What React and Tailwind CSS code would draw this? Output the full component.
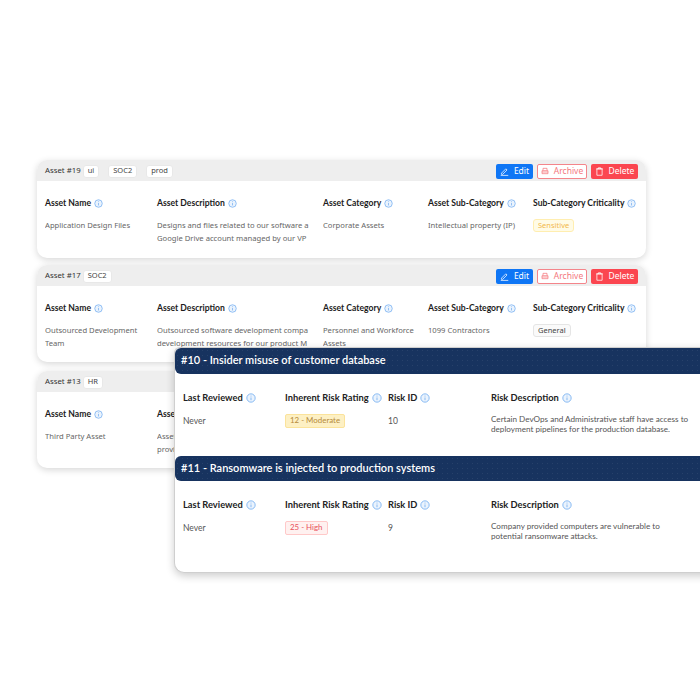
import React from "react";

const sans = "font-['Noto_Sans','Open_Sans',sans-serif]";
const lato = "font-['Lato',sans-serif]";

function Info({ size = "w-[9px] h-[9px]" }) {
  return (
    <svg viewBox="0 0 12 12" className={`${size} shrink-0`} fill="none" stroke="#74aef0" strokeWidth="1">
      <circle cx="6" cy="6" r="5" fill="#eaf3fd" />
      <path d="M6 5.4v3.2" />
      <path d="M6 3.2v1" />
    </svg>
  );
}

function Badge({ children }) {
  return (
    <span className="inline-flex items-center h-[13px] px-[4px] bg-white border border-[#e8e8e8] rounded-[3px] text-[7.5px] text-[#444]">
      {children}
    </span>
  );
}

function Buttons() {
  return (
    <div className="ml-auto flex items-center text-[8.5px]">
      <button className="flex items-center justify-center gap-[5px] w-[37px] h-[15px] rounded-[2px] bg-[#0f76f5] text-white">
        <svg viewBox="0 0 12 12" className="w-[9px] h-[9px]" fill="none" stroke="white" strokeWidth="1">
          <path d="M2 8.2 7.8 2.4l1.6 1.6L3.6 9.8H2z" />
          <path d="M1 11.2h10" />
        </svg>
        Edit
      </button>
      <button className="flex items-center justify-center gap-[5px] w-[50px] h-[15px] ml-[4px] rounded-[2px] bg-white border border-[#f4858b] text-[#f4767d]">
        <svg viewBox="0 0 12 12" className="w-[8px] h-[8px]" fill="none" stroke="#f4767d" strokeWidth="1.1">
          <path d="M3 5V2h6v3" />
          <path d="M1.5 5.5h9V10h-9z" />
          <path d="M1.5 7.5h9" />
        </svg>
        Archive
      </button>
      <button className="flex items-center justify-center gap-[5px] w-[47px] h-[15px] ml-[4px] rounded-[2px] bg-[#fb4650] text-white">
        <svg viewBox="0 0 12 12" className="w-[9px] h-[9px]" fill="none" stroke="white" strokeWidth="1">
          <path d="M1.5 2.5h9" />
          <path d="M4.5 2.5V1h3v1.5" />
          <path d="M2.5 2.5h7V11h-7z" />
        </svg>
        Delete
      </button>
    </div>
  );
}

function AssetHead({ children, w }) {
  return (
    <div className={`flex items-center gap-[3px] text-[8.6px] font-bold text-[#1c1c1c] whitespace-nowrap ${lato} ${w}`}>
      {children}
      <Info />
    </div>
  );
}

function AssetCell({ children, w }) {
  return <div className={`text-[7.65px] leading-[13px] text-[#666] overflow-hidden ${w}`}>{children}</div>;
}

function AssetCard({ id, tags, name, desc, cat, sub, crit, critClass, h }) {
  return (
    <div className={`w-[609px] ${h} bg-white rounded-[10px] overflow-hidden shadow-[0_2px_7px_rgba(0,0,0,0.16)] ${sans}`}>
      <div className="flex items-center h-[21px] pl-[8px] pr-[8px] pt-[1px] bg-[#eeeeee]">
        <span className="text-[7.8px] text-[#333] mr-[2px]">Asset #{id}</span>
        <div className="flex items-center gap-[9px]">
          {tags.map((t) => (
            <Badge key={t}>{t}</Badge>
          ))}
        </div>
        <Buttons />
      </div>
      <div className="flex pl-[8px] pt-[16px]">
        <AssetHead w="w-[112px]">Asset Name</AssetHead>
        <AssetHead w="w-[166px]">Asset Description</AssetHead>
        <AssetHead w="w-[105px]">Asset Category</AssetHead>
        <AssetHead w="w-[105px]">Asset Sub-Category</AssetHead>
        <AssetHead w="w-[113px]">Sub-Category Criticality</AssetHead>
      </div>
      <div className="flex pl-[8px] pt-[9px]">
        <AssetCell w="w-[112px] pr-[8px]">{name}</AssetCell>
        <div className="w-[166px]">
          <AssetCell w="w-[153px] whitespace-nowrap">
            {desc[0]}
            <br />
            {desc[1]}
          </AssetCell>
        </div>
        <AssetCell w="w-[105px] pr-[5px]">{cat}</AssetCell>
        <AssetCell w="w-[105px]">{sub}</AssetCell>
        <div className="w-[113px] flex items-start">
          <span className={`flex items-center h-[13px] px-[4px] rounded-[3px] border text-[7.5px] ${critClass}`}>{crit}</span>
        </div>
      </div>
    </div>
  );
}

function RiskHead({ children, w }) {
  return (
    <div className={`flex items-center gap-[3px] text-[9.3px] font-bold text-[#222] whitespace-nowrap ${w}`}>
      {children}
      <Info size="w-[10px] h-[10px]" />
    </div>
  );
}

function Risk({ title, titleH, rating, ratingClass, id, desc }) {
  return (
    <div>
      <div className={`${titleH} flex items-center pl-[6px] pb-[1px] rounded-l-[6px] bg-[#17335f] bg-[radial-gradient(rgba(255,255,255,0.07)_0.5px,transparent_0.5px)] bg-[length:5px_5px] text-white text-[11px] font-semibold whitespace-nowrap`}>
        {title}
      </div>
      <div className="h-[82px] pl-[8px]">
        <div className="flex pt-[17px]">
          <RiskHead w="w-[102px]">Last Reviewed</RiskHead>
          <RiskHead w="w-[103px]">Inherent Risk Rating</RiskHead>
          <RiskHead w="w-[103px]">Risk ID</RiskHead>
          <RiskHead w="w-[200px]">Risk Description</RiskHead>
        </div>
        <div className="flex pt-[9px] text-[8.5px] text-[#555]">
          <div className="w-[102px] pt-[1px]">Never</div>
          <div className="w-[103px] flex items-start">
            <span className={`flex items-center h-[14px] px-[4px] rounded-[2px] border text-[7.9px] ${ratingClass}`}>{rating}</span>
          </div>
          <div className="w-[103px] pt-[1px]">{id}</div>
          <div className="w-[200px] leading-[10px] text-[8.15px] text-[#555]">{desc}</div>
        </div>
      </div>
    </div>
  );
}

export default function App() {
  return (
    <div className="relative w-[700px] h-[700px] overflow-hidden bg-white">
      <div className="flex flex-col items-start pl-[37px] pt-[160px]">
        <AssetCard
          h="h-[98px]"
          id="19"
          tags={["ui", "SOC2", "prod"]}
          name="Application Design Files"
          desc={["Designs and files related to our software a", "Google Drive account managed by our VP"]}
          cat="Corporate Assets"
          sub="Intellectual property (IP)"
          crit="Sensitive"
          critClass="bg-[#fffbe6] border-[#ffeeb0] text-[#f2b84b]"
        />
        <div className="h-[7px]" />
        <AssetCard
          h="h-[97px]"
          id="17"
          tags={["SOC2"]}
          name="Outsourced Development Team"
          desc={["Outsourced software development compa", "development resources for our product M"]}
          cat="Personnel and Workforce Assets"
          sub="1099 Contractors"
          crit="General"
          critClass="bg-[#fafafa] border-[#e5e5e5] text-[#444]"
        />
        <div className="h-[9px]" />
        <AssetCard
          h="h-[97px]"
          id="13"
          tags={["HR"]}
          name="Third Party Asset"
          desc={["Asset description for a third party", "provider used by our company"]}
          cat="Third Party Assets"
          sub="Vendors"
          crit="General"
          critClass="bg-[#fafafa] border-[#e5e5e5] text-[#444]"
        />
      </div>

      <div className={`absolute left-[174px] top-[347px] w-[560px] h-[226px] bg-white border-l border-t border-b border-[#cfcfcf] rounded-bl-[10px] rounded-tl-[6px] shadow-[0_3px_8px_rgba(0,0,0,0.2)] ${lato}`}>
        <Risk
          titleH="h-[26px]"
          title="#10 - Insider misuse of customer database"
          rating="12 - Moderate"
          ratingClass="bg-[#fdf0c4] border-[#fbe39b] text-[#b58a3a]"
          id="10"
          desc="Certain DevOps and Administrative staff have access to deployment pipelines for the production database."
        />
        <Risk
          titleH="h-[25px]"
          title="#11 - Ransomware is injected to production systems"
          rating="25 - High"
          ratingClass="bg-[#fff1f0] border-[#ffc9c9] text-[#e8505b]"
          id="9"
          desc="Company provided computers are vulnerable to potential ransomware attacks."
        />
      </div>
    </div>
  );
}
